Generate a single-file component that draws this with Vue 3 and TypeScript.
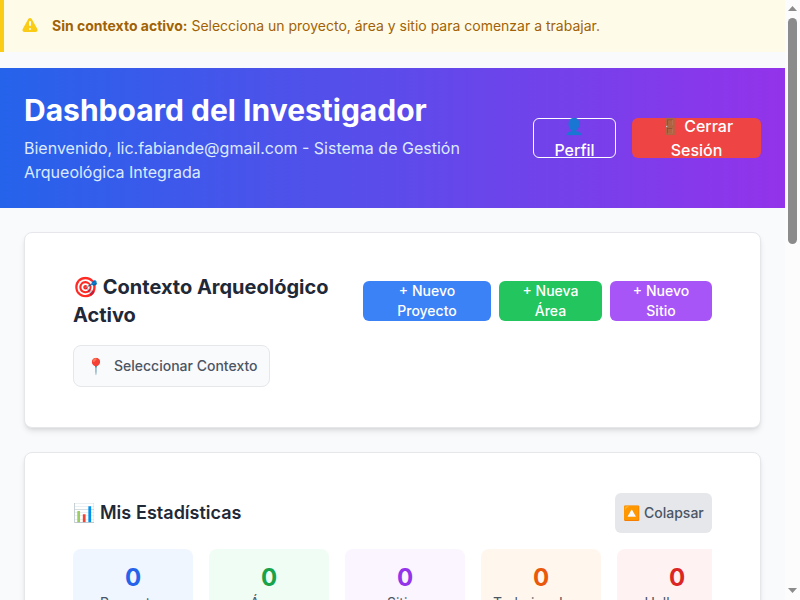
<script setup lang="ts">
interface Stat {
  label: string
  value: number
  tone: string
}

const stats: Stat[] = [
  { label: 'Proyectos', value: 0, tone: 'blue' },
  { label: 'Áreas', value: 0, tone: 'green' },
  { label: 'Sitios', value: 0, tone: 'purple' },
  { label: 'Trabajos de Campo', value: 0, tone: 'orange' },
  { label: 'Hallazgos', value: 0, tone: 'red' },
]
</script>

<template>
  <div class="window">
    <main class="page">
      <div class="notice">
        <svg class="warn" viewBox="0 0 20 20" fill="currentColor">
          <path fill-rule="evenodd" clip-rule="evenodd" d="M8.257 3.099c.765-1.36 2.722-1.36 3.486 0l5.58 9.92c.75 1.334-.213 2.98-1.742 2.98H4.42c-1.53 0-2.493-1.646-1.743-2.98l5.58-9.92zM11 13a1 1 0 11-2 0 1 1 0 012 0zm-1-8a1 1 0 00-1 1v3a1 1 0 002 0V6a1 1 0 00-1-1z" />
        </svg>
        <p><strong>Sin contexto activo:</strong> Selecciona un proyecto, área y sitio para comenzar a trabajar.</p>
      </div>

      <header class="hero">
        <div class="hero-text">
          <h1>Dashboard del Investigador</h1>
          <p>Bienvenido, lic.fabiande@gmail.com - Sistema de Gestión Arqueológica Integrada</p>
        </div>
        <div class="hero-actions">
          <button class="btn profile"><span>👤<br />Perfil</span></button>
          <button class="btn logout"><span>🚪 Cerrar<br />Sesión</span></button>
        </div>
      </header>

      <div class="sections">
        <section class="card">
          <div class="context-head">
            <h2>🎯 Contexto Arqueológico Activo</h2>
            <div class="create">
              <button class="btn small project"><span>+ Nuevo<br />Proyecto</span></button>
              <button class="btn small area"><span>+ Nueva<br />Área</span></button>
              <button class="btn small site"><span>+ Nuevo<br />Sitio</span></button>
            </div>
          </div>
          <button class="select"><span class="pin">📍</span><span>Seleccionar Contexto</span></button>
        </section>

        <section class="card">
          <div class="stats-head">
            <h3>📊 Mis Estadísticas</h3>
            <button class="btn small collapse">🔼 Colapsar</button>
          </div>
          <div class="stats">
            <div v-for="s in stats" :key="s.label" class="stat" :class="s.tone">
              <div class="value">{{ s.value }}</div>
              <div class="label">{{ s.label }}</div>
            </div>
          </div>
        </section>
      </div>
    </main>

    <div class="scrollbar">
      <svg class="arrow" viewBox="0 0 15 15"><path d="M3 11 7.5 6 12 11z" /></svg>
      <div class="thumb"></div>
      <svg class="arrow down" viewBox="0 0 15 15"><path d="M3 3h9L7.5 8z" /></svg>
    </div>
  </div>
</template>

<style>
body {
  overflow: hidden;
}
</style>

<style scoped>
* {
  box-sizing: border-box;
  margin: 0;
}
.window {
  display: flex;
  width: 800px;
  height: 600px;
  overflow: hidden;
  background: #f9fafb;
  font-family: Inter, sans-serif;
  font-size: 16px;
  line-height: 24px;
}
.page {
  flex: 1;
  min-width: 0;
  overflow: hidden;
}
.notice {
  display: flex;
  align-items: center;
  gap: 12px;
  height: 52px;
  padding: 0 16px;
  border-left: 4px solid #facc15;
  background: #fefce8;
  color: #a16207;
  font-size: 14px;
  line-height: 20px;
}
.warn {
  width: 20px;
  height: 20px;
  color: #facc15;
}
.notice strong {
  font-weight: 700;
}
.hero {
  display: flex;
  align-items: center;
  justify-content: space-between;
  height: 140px;
  margin-top: 16px;
  padding: 24px;
  background: linear-gradient(to right, #2563eb, #9333ea);
  color: #fff;
}
.hero-text {
  width: 460px;
}
h1 {
  margin-bottom: 8px;
  font-size: 30px;
  font-weight: 700;
  line-height: 36px;
}
.hero-text p {
  color: #dbeafe;
}
.hero-actions {
  display: flex;
  gap: 16px;
}
.btn {
  display: flex;
  align-items: center;
  justify-content: center;
  height: 40px;
  padding: 0;
  border: 0;
  border-radius: 6px;
  color: #fff;
  font: 500 16px/24px Inter, sans-serif;
  text-align: center;
}
.btn.profile {
  width: 83px;
  border: 1px solid #fff;
  background: transparent;
}
.logout {
  width: 129px;
  background: #ef4444;
}
.sections {
  display: grid;
  gap: 24px;
  padding: 24px;
}
.card {
  min-width: 0;
  padding: 40px 48px;
  border: 1px solid #e5e7eb;
  border-radius: 8px;
  background: #fff;
  box-shadow: 0 4px 6px -1px rgb(0 0 0 / 0.1), 0 2px 4px -2px rgb(0 0 0 / 0.1);
}
.context-head,
.stats-head {
  display: flex;
  align-items: center;
  justify-content: space-between;
  margin-bottom: 16px;
}
h2 {
  width: 274px;
  color: #1f2937;
  font-size: 20px;
  font-weight: 700;
  line-height: 28px;
}
.create {
  display: flex;
  gap: 8px;
}
.btn.small {
  font-size: 14px;
  line-height: 20px;
}
.project {
  width: 128px;
  background: #3b82f6;
}
.area {
  width: 103px;
  background: #22c55e;
}
.site {
  width: 102px;
  background: #a855f7;
}
.select {
  display: flex;
  align-items: center;
  gap: 8px;
  width: 197px;
  height: 42px;
  padding: 0 11px 0 12px;
  border: 1px solid #e5e7eb;
  border-radius: 8px;
  background: #f9fafb;
  color: #4b5563;
  font: 500 14px/20px Inter, sans-serif;
  white-space: nowrap;
}
.pin {
  width: 20px;
  font-size: 16px;
}
h3 {
  color: #1f2937;
  font-size: 18px;
  font-weight: 600;
  line-height: 28px;
  word-spacing: 0.4px;
}
.btn.collapse {
  width: 97px;
  background: #e5e7eb;
  color: #4b5563;
}
.stats {
  display: flex;
  gap: 16px;
  overflow: hidden;
}
.stat {
  flex: 0 0 120px;
  min-width: 0;
  padding: 12px;
  border-radius: 8px;
  text-align: center;
}
.value {
  font-size: 24px;
  font-weight: 700;
  line-height: 33px;
}
.label {
  overflow: hidden;
  color: #4b5563;
  font-size: 14px;
  line-height: 18px;
  text-overflow: ellipsis;
  white-space: nowrap;
}
.blue { background: #eff6ff; }
.blue .value { color: #2563eb; }
.green { background: #f0fdf4; }
.green .value { color: #16a34a; }
.purple { background: #faf5ff; }
.purple .value { color: #9333ea; }
.orange { background: #fff7ed; }
.orange .value { color: #ea580c; }
.red { background: #fef2f2; }
.red .value { color: #dc2626; }
.scrollbar {
  display: flex;
  flex-direction: column;
  align-items: center;
  width: 15px;
  background: #fcfcfc;
}
.arrow {
  display: block;
  width: 15px;
  height: 15px;
  fill: #8b8b8b;
}
.thumb {
  width: 9px;
  height: 226px;
  margin-top: 3px;
  border-radius: 5px;
  background: #8b8b8b;
}
.down {
  margin-top: auto;
}
</style>
